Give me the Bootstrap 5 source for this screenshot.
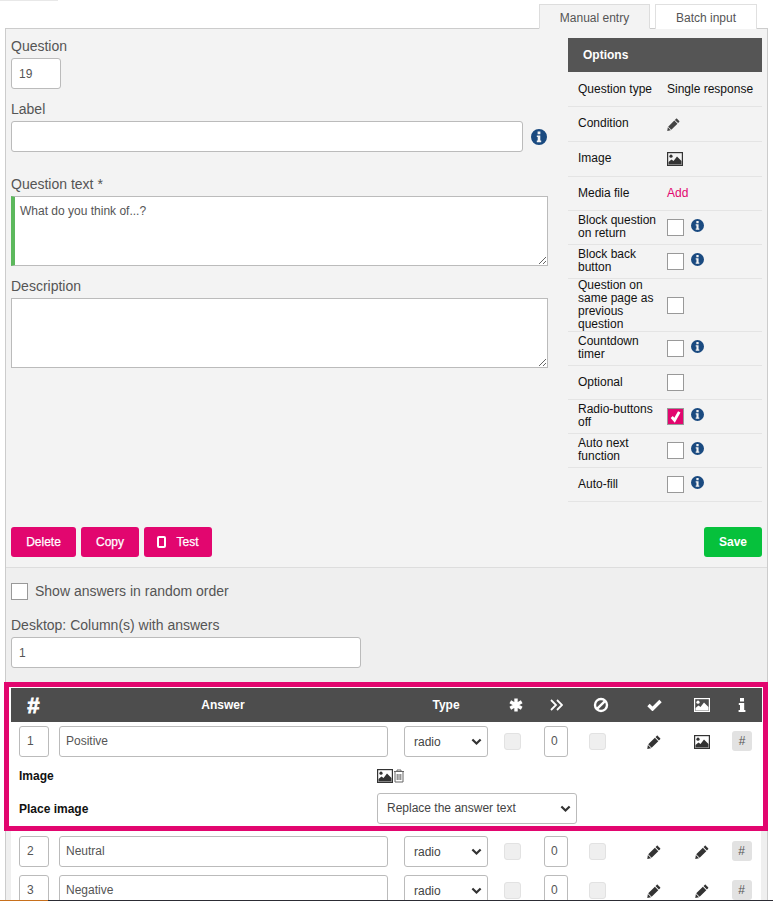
<!DOCTYPE html>
<html lang="en">
<head>
<meta charset="utf-8">
<title>Question editor</title>
<link href="https://cdn.jsdelivr.net/npm/bootstrap@5.3.0/dist/css/bootstrap.min.css" rel="stylesheet">
<style>
html,body{height:901px;overflow:hidden;background:#fff}
body{font-family:"Liberation Sans",Arial,sans-serif;font-size:12px;color:#222;position:relative}
.top-strip{position:absolute;left:0;top:0;width:58px;height:1px;background:#e8e8e8}
.bottom-strip{position:absolute;left:0;right:0;bottom:0;height:1px;background:#2c2c34;z-index:5}
.bottom-strip i{display:block;width:48px;height:1px;background:#c8701c}
.page-wrap{padding:4px 5px 0}
.tab-row{border:0;gap:5px;padding-right:11px;margin-bottom:-1px;position:relative;z-index:1}
.tab-row .nav-link{font-size:12px;color:#555;height:25px;line-height:14px;padding:6px 0 0;text-align:center;border:1px solid #e0e0e0;border-bottom:0;border-radius:0;background:#fff;margin:0}
.tab-row .nav-link.active{background:#f3f3f3;color:#555;border-color:#ddd;border-bottom:1px solid #f3f3f3}
.tab-a{width:111px}.tab-b{width:102px}
.main-panel{border:1px solid #ccc;border-bottom:0;background:#f3f3f3}
.upper{padding:7px 5px 0}
.col-left{width:537px}
.col-right{width:194px;margin:2px 0 0 auto}
.fld-label{display:block;font-size:14px;line-height:20px;color:#555;margin:0 0 2px}
.ctl{height:31px;font-size:12px;color:#555;padding:0 7px;border:1px solid #bbb;border-radius:3px;box-shadow:none}
.ctl-small{width:50px;margin-bottom:10px}
.ctl-label{width:512px}
.label-line{margin-bottom:22px}
.info-a{width:16px;height:16px;color:#1a4a80;margin-left:8px}
.txt-area{height:70px;width:537px;font-size:12px;color:#555;padding:5px 8px;border:1px solid #bbb;border-radius:0;margin-bottom:10px;box-shadow:none}
.txt-green{border-left:4px solid #5cb85c;padding-left:5px}
.opt-head{background:#555;color:#fff;font-weight:700;font-size:12px;height:34px;line-height:34px;padding-left:15px}
.opt-row{display:flex;align-items:center;min-height:34px;border-bottom:1px solid #e4e4e4;line-height:13px;color:#111;padding-left:10px}
.opt-tall{min-height:35px}
.opt-name{width:89px;flex:none;padding-right:3px}
.opt-up{padding-bottom:2px}
.opt-val{display:flex;align-items:center}
.opt-link{color:#e2066f;text-decoration:none}
.ic-13{width:13px;height:13px;color:#444}
.ic-img{width:16px;height:14px;color:#333}
.ic-info{width:13px;height:13px;color:#1a4a80;margin:-5px 0 0 7px}
.form-check-input.chk[type=checkbox]{width:17px;height:17px;margin:0;border:1px solid #999;border-radius:0;background-color:#fff;flex:none;box-shadow:none}
.form-check-input.chk[type=checkbox]:checked{background-color:#e2066f;border-color:#999;background-size:15px;background-image:url("data:image/svg+xml,%3csvg xmlns='http://www.w3.org/2000/svg' viewBox='0 0 16 16'%3e%3cpath fill='none' stroke='%23fff' stroke-width='3' d='M4 8.5l3 3.5 5-9'/%3e%3c/svg%3e")}
.action-row{margin-top:25px;padding:0 5px 10px;border-bottom:1px solid #ddd;gap:5px}
.btn-pink,.btn-save{height:30px;font-size:12px;color:#fff;border:0;border-radius:3px;padding:0;line-height:28px}
.btn-pink{background:#e2066f;-webkit-text-stroke:.25px #fff}
.lift{line-height:26px}
.btn-save{background:#06c13c;width:58px;font-weight:700}
.btn-pink:hover{background:#e2066f;color:#fff}
.btn-save:hover{background:#06c13c;color:#fff}
.w-del{width:65px}.w-cop{width:58px}.w-tst{width:68px}
.ic-phone{width:9px;height:12px;margin-right:10px;vertical-align:-2px}
.lower{background:#efefef;padding:15px 0 0}
.random-row{padding-left:5px;height:17px}
.random-row label{font-size:14px;line-height:17px;color:#555;margin-left:7px}
.cols-block{padding:15px 5px 14px}
.ctl-cols{width:350px}
.answer-frame{border:5px solid #e2066f;margin:0 -1px 0 -2px;padding:1px 1px 2px 2px;background:#fff}
.ans-grid{display:grid;grid-template-columns:44px 341px 100px 40px 40px 50px 56px 40px 1fr;align-items:center}
.ans-head{background:#4d4d4d;color:#fff;height:34px;font-weight:700;text-align:center}
.ans-head>div{display:flex;justify-content:center;align-items:center}
.hash-h{font-size:22px;font-style:italic;-webkit-text-stroke:.8px #fff}
.pr5{padding-right:5px}
.ans-row{height:31px}
.ans-row>div{display:flex;align-items:center}
.ans-first{margin-top:4px}
.ctl-n{width:30px;margin-left:8px;padding-bottom:2px}
.ctl-a{width:329px;margin-left:4px;padding:0 6px 2px}
.sel{width:84px;height:31px;font-size:12px;color:#444;padding:0 20px 0 9px;border:1px solid #bbb;border-radius:3px;background-position:right 5px center;background-size:11px 9px;background-image:url("data:image/svg+xml,%3csvg xmlns='http://www.w3.org/2000/svg' viewBox='0 0 16 12'%3e%3cpath fill='none' stroke='%23333' stroke-width='3.200' d='M2 3l6 6 6-6'/%3e%3c/svg%3e");box-shadow:none}
.dis{width:17px;height:17px;margin:0 0 0 8px;background:#efefef;border:1px solid #e2e2e2;border-radius:2px;opacity:1!important}
.dis-b{margin-left:13px}
.ctl-z{width:24px;margin-left:8px;padding:0 6px 2px;margin-bottom:0}
.ic-pen{width:14px;height:14px;color:#333}
.cen{justify-content:center}
.btn-hash{width:20px;height:20px;padding:0;background:#e2e2e2;border:0;border-radius:3px;font-size:12px;line-height:20px;color:#555;margin-bottom:1px}
.extra-row{display:flex;align-items:center;padding-left:8px;font-weight:700;color:#111}
.extra-name{width:358px}
.extra-img{height:18px;margin:10px 0 8px}
.ic-trash{width:12px;height:14px;color:#666}
.ans-sel-wide{width:200px;font-weight:400;padding:0 20px 2px 9px}
.below{background:#efefef;padding:0 6px 0 5px}
.below-in{background:#fff;padding:5px 0 0;display:flex;flex-direction:column;gap:8px}
</style>
</head>
<body>
<svg width="0" height="0" class="position-absolute">
<symbol id="s-pen" viewBox="0 0 16 16"><path fill="currentColor" d="M12.4 1l2.6 2.6c.4.4.4.9 0 1.3l-1.4 1.4-3.9-3.9L11.1 1c.4-.4.9-.4 1.3 0zM9 3.1l3.9 3.9-7.6 7.6-3.9-3.9zM1 11.4l3.6 3.6-4.3.9z"/></symbol>
<symbol id="s-img" viewBox="0 0 16 14"><rect x=".6" y=".6" width="14.8" height="12.8" fill="none" stroke="currentColor" stroke-width="1.2"/><circle cx="4" cy="4.2" r="1.6" fill="currentColor"/><path fill="currentColor" d="M1.5 12.5V10l3-2.4 2 1.4L10 4.6 14.5 9v3.5z"/></symbol>
<symbol id="s-info" viewBox="0 0 16 16"><path fill="currentColor" fill-rule="evenodd" d="M8 0a8 8 0 1 1 0 16A8 8 0 0 1 8 0zM6.6 2.6v2.6h2.8V2.6zM5.8 6.4v1.5h.9v3.7h-.9v1.6h4.4v-1.6h-.9V6.4z"/></symbol>
<symbol id="s-trash" viewBox="0 0 12 14"><path fill="none" stroke="currentColor" d="M1 2.500h10M4 2.500V1h4v1.500M2 2.500v10.500h8V2.500M4.200 5v6M6 5v6M7.800 5v6"/></symbol>
</svg>
<div class="top-strip"></div>
<div class="page-wrap">
  <ul class="nav nav-tabs tab-row justify-content-end">
    <li class="nav-item"><a class="nav-link active tab-a" href="#">Manual entry</a></li>
    <li class="nav-item"><a class="nav-link tab-b" href="#">Batch input</a></li>
  </ul>
  <div class="main-panel">
    <div class="upper d-flex">
      <div class="col-left">
        <label class="fld-label">Question</label>
        <input class="form-control ctl ctl-small" value="19">
        <label class="fld-label">Label</label>
        <div class="d-flex align-items-center label-line">
          <input class="form-control ctl ctl-label">
          <svg class="info-a"><use href="#s-info"/></svg>
        </div>
        <label class="fld-label">Question text *</label>
        <textarea class="form-control txt-area txt-green">What do you think of...?</textarea>
        <label class="fld-label">Description</label>
        <textarea class="form-control txt-area"></textarea>
      </div>
      <div class="col-right">
        <div class="opt-head">Options</div>
        <div class="opt-row opt-tall"><div class="opt-name">Question type</div><div class="opt-val">Single response</div></div>
        <div class="opt-row opt-tall"><div class="opt-name opt-up">Condition</div><div class="opt-val"><svg class="ic-13"><use href="#s-pen"/></svg></div></div>
        <div class="opt-row opt-tall"><div class="opt-name opt-up">Image</div><div class="opt-val"><svg class="ic-img"><use href="#s-img"/></svg></div></div>
        <div class="opt-row"><div class="opt-name">Media file</div><div class="opt-val"><a class="opt-link" href="#">Add</a></div></div>
        <div class="opt-row"><div class="opt-name opt-up">Block question on return</div><div class="opt-val"><input class="form-check-input chk" type="checkbox"><svg class="ic-info"><use href="#s-info"/></svg></div></div>
        <div class="opt-row"><div class="opt-name opt-up">Block back button</div><div class="opt-val"><input class="form-check-input chk" type="checkbox"><svg class="ic-info"><use href="#s-info"/></svg></div></div>
        <div class="opt-row"><div class="opt-name">Question on same page as previous question</div><div class="opt-val"><input class="form-check-input chk" type="checkbox"></div></div>
        <div class="opt-row"><div class="opt-name opt-up">Countdown timer</div><div class="opt-val"><input class="form-check-input chk" type="checkbox"><svg class="ic-info"><use href="#s-info"/></svg></div></div>
        <div class="opt-row"><div class="opt-name">Optional</div><div class="opt-val"><input class="form-check-input chk" type="checkbox"></div></div>
        <div class="opt-row"><div class="opt-name opt-up">Radio-buttons off</div><div class="opt-val"><input class="form-check-input chk" type="checkbox" checked><svg class="ic-info"><use href="#s-info"/></svg></div></div>
        <div class="opt-row"><div class="opt-name opt-up">Auto next function</div><div class="opt-val"><input class="form-check-input chk" type="checkbox"><svg class="ic-info"><use href="#s-info"/></svg></div></div>
        <div class="opt-row"><div class="opt-name">Auto-fill</div><div class="opt-val"><input class="form-check-input chk" type="checkbox"><svg class="ic-info"><use href="#s-info"/></svg></div></div>
      </div>
    </div>
    <div class="action-row d-flex">
      <button class="btn btn-pink lift w-del" type="button">Delete</button>
      <button class="btn btn-pink lift w-cop" type="button">Copy</button>
      <button class="btn btn-pink w-tst" type="button"><svg class="ic-phone" viewBox="0 0 9 12"><rect x="1" y="1" width="7" height="10" rx="1" fill="none" stroke="#fff" stroke-width="2"/></svg>Test</button>
      <button class="btn btn-save ms-auto" type="button">Save</button>
    </div>
    <div class="lower">
      <div class="random-row d-flex align-items-center">
        <input class="form-check-input chk" type="checkbox" id="rnd"><label for="rnd">Show answers in random order</label>
      </div>
      <div class="cols-block">
        <label class="fld-label">Desktop: Column(s) with answers</label>
        <input class="form-control ctl ctl-cols" value="1">
      </div>
      <div class="answer-frame">
        <div class="ans-grid ans-head">
          <div class="hash-h">#</div><div class="pr5">Answer</div><div>Type</div>
          <div><svg width="14" height="14" viewBox="0 0 14 14"><path stroke="#fff" stroke-width="3.400" d="M7 .5v13M1.300 3.800l11.400 6.400M12.700 3.800L1.300 10.200"/></svg></div>
          <div><svg width="13" height="12" viewBox="0 0 13 12"><path fill="none" stroke="#fff" stroke-width="1.800" d="M1 1l5 5-5 5M7 1l5 5-5 5"/></svg></div>
          <div><svg width="16" height="16" viewBox="0 0 16 16"><circle cx="8" cy="8" r="6" fill="none" stroke="#fff" stroke-width="2.400"/><path stroke="#fff" stroke-width="2.400" d="M3.800 12.200l8.400-8.400"/></svg></div>
          <div><svg width="15" height="12" viewBox="0 0 15 12"><path fill="none" stroke="#fff" stroke-width="3.400" d="M1.500 6l4 4 8-8"/></svg></div>
          <div><svg class="ic-img text-white"><use href="#s-img"/></svg></div>
          <div><svg width="8" height="14" viewBox="0 0 8 14"><path fill="#fff" d="M2 0h4v3.400H2zM.8 5h5.400v7h1.200v2H.6v-2h1.400V7H.8z"/></svg></div>
        </div>
        <div class="ans-grid ans-row ans-first">
          <div><input class="form-control ctl ctl-n" value="1"></div>
          <div><input class="form-control ctl ctl-a" value="Positive"></div>
          <div class="cen"><select class="form-select sel"><option>radio</option></select></div>
          <div><input class="form-check-input dis" type="checkbox" disabled></div>
          <div><input class="form-control ctl ctl-z" value="0"></div>
          <div><input class="form-check-input dis dis-b" type="checkbox" disabled></div>
          <div class="cen"><svg class="ic-pen"><use href="#s-pen"/></svg></div>
          <div class="cen"><svg class="ic-img"><use href="#s-img"/></svg></div>
          <div class="cen"><button class="btn btn-hash" type="button">#</button></div>
        </div>
        <div class="extra-row extra-img"><div class="extra-name">Image</div><svg class="ic-img"><use href="#s-img"/></svg><svg class="ic-trash"><use href="#s-trash"/></svg></div>
        <div class="extra-row"><div class="extra-name">Place image</div><select class="form-select sel ans-sel-wide"><option>Replace the answer text</option></select></div>
      </div>
      <div class="below"><div class="below-in">
        <div class="ans-grid ans-row">
          <div><input class="form-control ctl ctl-n" value="2"></div>
          <div><input class="form-control ctl ctl-a" value="Neutral"></div>
          <div class="cen"><select class="form-select sel"><option>radio</option></select></div>
          <div><input class="form-check-input dis" type="checkbox" disabled></div>
          <div><input class="form-control ctl ctl-z" value="0"></div>
          <div><input class="form-check-input dis dis-b" type="checkbox" disabled></div>
          <div class="cen"><svg class="ic-pen"><use href="#s-pen"/></svg></div>
          <div class="cen"><svg class="ic-pen"><use href="#s-pen"/></svg></div>
          <div class="cen"><button class="btn btn-hash" type="button">#</button></div>
        </div>
        <div class="ans-grid ans-row">
          <div><input class="form-control ctl ctl-n" value="3"></div>
          <div><input class="form-control ctl ctl-a" value="Negative"></div>
          <div class="cen"><select class="form-select sel"><option>radio</option></select></div>
          <div><input class="form-check-input dis" type="checkbox" disabled></div>
          <div><input class="form-control ctl ctl-z" value="0"></div>
          <div><input class="form-check-input dis dis-b" type="checkbox" disabled></div>
          <div class="cen"><svg class="ic-pen"><use href="#s-pen"/></svg></div>
          <div class="cen"><svg class="ic-pen"><use href="#s-pen"/></svg></div>
          <div class="cen"><button class="btn btn-hash" type="button">#</button></div>
        </div>
      </div></div>
    </div>
  </div>
</div>
<div class="bottom-strip"><i></i></div>
<script src="https://cdn.jsdelivr.net/npm/bootstrap@5.3.0/dist/js/bootstrap.bundle.min.js"></script>
</body>
</html>
